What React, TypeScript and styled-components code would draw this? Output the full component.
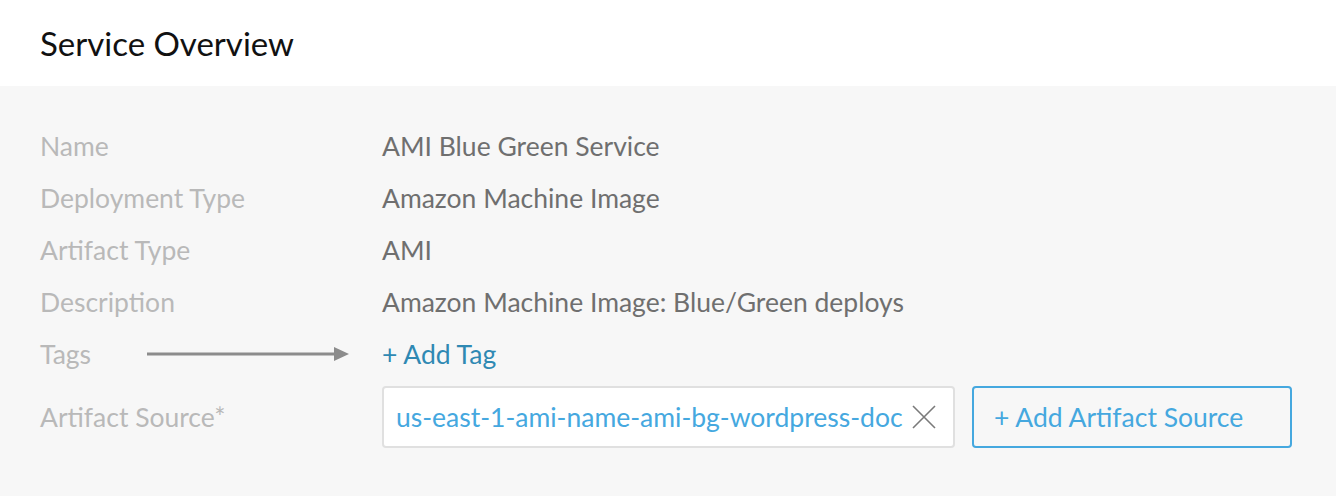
import styled, { createGlobalStyle } from "styled-components";

const GlobalStyle = createGlobalStyle`
  html, body {
    margin: 0;
    padding: 0;
    background: #f7f7f7;
  }
  body {
    font-family: "Source Sans Pro", Lato, "Liberation Sans", sans-serif;
  }
`;

const Page = styled.div`
  width: 1336px;
  height: 496px;
  display: flex;
  flex-direction: column;
  overflow: hidden;
`;

const Header = styled.div`
  height: 86px;
  background: #ffffff;
  display: flex;
  align-items: center;
  padding: 0 40px;
  box-sizing: border-box;
`;

const Title = styled.h1`
  margin: 0;
  font-size: 33px;
  font-weight: 400;
  color: #111;
`;

const Body = styled.div`
  flex: 1;
  background: #f7f7f7;
  padding: 34px 40px 0;
  display: grid;
  grid-template-columns: 342px 1fr;
  grid-template-rows: repeat(5, 52px) auto;
  align-content: start;
  align-items: center;
`;

const Label = styled.div`
  font-size: 26.5px;
  color: #b9b9b9;
  display: flex;
  align-items: center;
`;

const Value = styled.div`
  font-size: 26.5px;
  color: #6f6f6f;
  display: flex;
  align-items: center;
`;

const AddLink = styled.a`
  color: #2f89b3;
  font-size: 26.5px;
  cursor: pointer;
`;

const Arrow = styled.svg`
  margin-left: 56px;
`;

const SourceRow = styled.div`
  display: flex;
  gap: 17px;
  margin-top: 6px;
`;

const SourceLabel = styled(Label)`
  margin-top: 6px;
`;

const Chip = styled.div`
  width: 573px;
  height: 62px;
  box-sizing: border-box;
  background: #fff;
  border: 2px solid #e0e0e0;
  border-radius: 4px;
  display: flex;
  align-items: center;
  justify-content: space-between;
  padding: 0 17px 0 12px;
  color: #45a8df;
  font-size: 26.5px;
`;

const AddSourceButton = styled.button`
  width: 320px;
  height: 62px;
  box-sizing: border-box;
  background: transparent;
  border: 2px solid #45a8df;
  border-radius: 4px;
  color: #45a8df;
  font-family: inherit;
  font-size: 26.5px;
  text-align: left;
  padding: 0 20px;
`;

const rows = [
  ["Name", "AMI Blue Green Service"],
  ["Deployment Type", "Amazon Machine Image"],
  ["Artifact Type", "AMI"],
  ["Description", "Amazon Machine Image: Blue/Green deploys"],
];

export default function App() {
  return (
    <Page>
      <GlobalStyle />
      <Header>
        <Title>Service Overview</Title>
      </Header>
      <Body>
        {rows.map(([k, v]) => [
          <Label key={k}>{k}</Label>,
          <Value key={k + "v"}>{v}</Value>,
        ])}
        <Label>
          Tags
          <Arrow width="202" height="16" viewBox="0 0 202 16">
            <line x1="0" y1="8" x2="190" y2="8" stroke="#8c8c8c" strokeWidth="3" />
            <polygon points="187,1 202,8 187,15" fill="#8c8c8c" />
          </Arrow>
        </Label>
        <Value>
          <AddLink>+ Add Tag</AddLink>
        </Value>
        <SourceLabel>Artifact Source*</SourceLabel>
        <SourceRow>
          <Chip>
            <span>us-east-1-ami-name-ami-bg-wordpress-doc</span>
            <svg width="24" height="24" viewBox="0 0 24 24">
              <path d="M1 1L23 23M23 1L1 23" stroke="#7a7a7a" strokeWidth="1.6" fill="none" />
            </svg>
          </Chip>
          <AddSourceButton>+ Add Artifact Source</AddSourceButton>
        </SourceRow>
      </Body>
    </Page>
  );
}
